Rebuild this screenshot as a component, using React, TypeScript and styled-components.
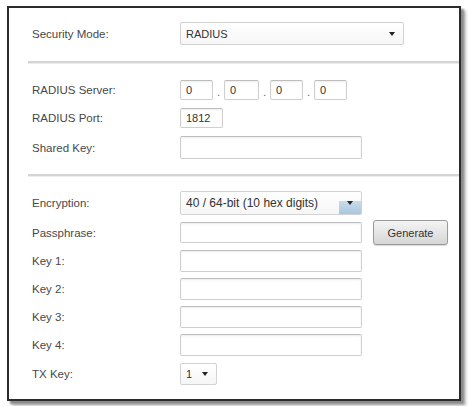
import styled, { createGlobalStyle } from "styled-components";

const GlobalStyle = createGlobalStyle`
    html, body {
        margin: 0;
        padding: 0;
        background: #fff;
    }
    body {
        font-family: "Liberation Sans", Arial, sans-serif;
    }
`;

const Page = styled.div`
    width: 468px;
    height: 406px;
    padding: 6px 0 0 7px;
    box-sizing: border-box;
    background: #fff;
`;

const Frame = styled.div`
    width: 454px;
    height: 395px;
    box-sizing: border-box;
    border: 2px solid #2b2b2b;
    box-shadow: 3px 3px 2px #8a8a8a, 5px 5px 3px #c4c4c4;
    background: #fff;
    padding: 0 0 0 23px;
    display: flex;
    flex-direction: column;
    color: #555;
    font-size: 11.5px;
`;

const Row = styled.div<{ $top: number; $h: number }>`
    display: flex;
    align-items: center;
    margin-top: ${(p) => p.$top}px;
    height: ${(p) => p.$h}px;
`;

const Label = styled.div`
    width: 148px;
    flex: none;
    color: #484848;
`;

const Separator = styled.div<{ $top: number }>`
    margin-top: ${(p) => p.$top}px;
    margin-left: -4px;
    height: 2px;
    background: #d4d4d4;
    border-bottom: 1px solid #ececec;
`;

const TextBox = styled.div<{ $w: number }>`
    width: ${(p) => p.$w}px;
    height: 100%;
    box-sizing: border-box;
    border: 1px solid #cfcfcf;
    border-top-color: #bdbdbd;
    border-radius: 2px;
    box-shadow: inset 0 1px 2px rgba(0, 0, 0, 0.08);
    background: #fff;
    display: flex;
    align-items: center;
    padding-left: 5px;
    color: #333;
    font-size: 11px;
`;

const Dot = styled.span`
    width: 11px;
    text-align: center;
    color: #666;
    align-self: flex-end;
    padding-bottom: 2px;
`;

const Select = styled.div<{ $w: number; $size?: number }>`
    width: ${(p) => p.$w}px;
    height: 100%;
    box-sizing: border-box;
    border: 1px solid #d2d2d2;
    border-radius: 2px;
    background: linear-gradient(#fff, #f6f6f6);
    display: flex;
    align-items: center;
    justify-content: space-between;
    padding: 0 0 0 5px;
    color: #333;
    font-size: ${(p) => p.$size ?? 11}px;
    white-space: nowrap;
`;

const Arrow = styled.span<{ $blue?: boolean }>`
    width: 22px;
    flex: none;
    align-self: stretch;
    display: flex;
    align-items: center;
    justify-content: center;
    ${(p) =>
        p.$blue &&
        `
        background: linear-gradient(rgba(255,255,255,0) 0%, rgba(255,255,255,0) 42%, #c7dceb 43%, #a9c7dc 100%);
    `}
    &::after {
        content: "";
        border-left: 3.5px solid transparent;
        border-right: 3.5px solid transparent;
        border-top: 4px solid ${(p) => (p.$blue ? "#1e2b3a" : "#222")};
    }
`;

const Button = styled.button`
    margin-left: 11px;
    width: 75px;
    height: 25px;
    box-sizing: border-box;
    border: 1px solid #9a9a9a;
    border-radius: 3px;
    background: linear-gradient(#f4f4f4, #d6d6d6);
    box-shadow: 0 1px 1px rgba(0, 0, 0, 0.15);
    font-family: "Liberation Sans", Arial, sans-serif;
    font-size: 11px;
    color: #333;
    padding: 0;
`;

export default function App() {
    return (
        <>
            <GlobalStyle />
            <Page>
                <Frame>
                    <Row $top={14} $h={23}>
                        <Label>Security Mode:</Label>
                        <Select $w={224}>
                            RADIUS
                            <Arrow />
                        </Select>
                    </Row>
                    <Separator $top={16} />
                    <Row $top={16} $h={20}>
                        <Label>RADIUS Server:</Label>
                        <TextBox $w={33}>0</TextBox>
                        <Dot>.</Dot>
                        <TextBox $w={35}>0</TextBox>
                        <Dot>.</Dot>
                        <TextBox $w={33}>0</TextBox>
                        <Dot>.</Dot>
                        <TextBox $w={33}>0</TextBox>
                    </Row>
                    <Row $top={8} $h={20}>
                        <Label>RADIUS Port:</Label>
                        <TextBox $w={43}>1812</TextBox>
                    </Row>
                    <Row $top={8} $h={23}>
                        <Label>Shared Key:</Label>
                        <TextBox $w={182} />
                    </Row>
                    <Separator $top={15} />
                    <Row $top={14} $h={24}>
                        <Label>Encryption:</Label>
                        <Select $w={182} $size={12}>
                            40 / 64-bit (10 hex digits)
                            <Arrow $blue />
                        </Select>
                    </Row>
                    <Row $top={5} $h={25}>
                        <Label>Passphrase:</Label>
                        <TextBox $w={182} style={{ height: 21 }} />
                        <Button>Generate</Button>
                    </Row>
                    <Row $top={5} $h={22}>
                        <Label>Key 1:</Label>
                        <TextBox $w={182} />
                    </Row>
                    <Row $top={6} $h={22}>
                        <Label>Key 2:</Label>
                        <TextBox $w={182} />
                    </Row>
                    <Row $top={6} $h={22}>
                        <Label>Key 3:</Label>
                        <TextBox $w={182} />
                    </Row>
                    <Row $top={6} $h={22}>
                        <Label>Key 4:</Label>
                        <TextBox $w={182} />
                    </Row>
                    <Row $top={7} $h={22}>
                        <Label>TX Key:</Label>
                        <Select $w={37}>
                            1
                            <Arrow />
                        </Select>
                    </Row>
                </Frame>
            </Page>
        </>
    );
}
